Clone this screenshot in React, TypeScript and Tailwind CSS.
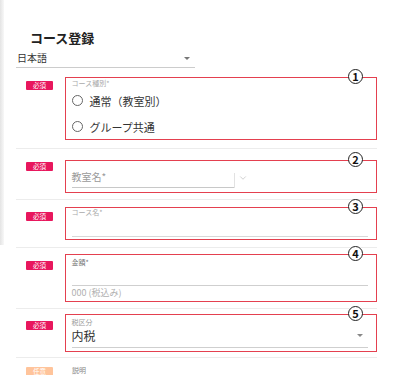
import { ChevronDown } from "lucide-react";

const font = "font-['Noto_Sans_CJK_JP','Noto_Sans',sans-serif]";

function Badge({ kind = "req", mt }: { kind?: "req" | "opt"; mt: string }) {
  return (
    <div className={`pl-[10px] ${mt}`}>
      <div
        className={`w-[27px] h-[9px] rounded-[1px] flex items-center justify-center text-[6.5px] leading-none text-white ${
          kind === "req" ? "bg-[#e8175d]" : "bg-[#ffc49b]"
        }`}
      >
        {kind === "req" ? "必須" : "任意"}
      </div>
    </div>
  );
}

function Num({ n }: { n: string }) {
  return (
    <div className="absolute -top-[9px] right-[13px] w-[15px] h-[15px] rounded-full border border-[#222] bg-white flex items-center justify-center text-[11px] font-bold leading-none text-[#111]">
      {n}
    </div>
  );
}

function Box({ h, n, children }: { h: string; n: string; children: React.ReactNode }) {
  return (
    <div className={`relative ml-[12px] w-[312px] ${h} border-[1.5px] border-[#e4404f] pl-[5.5px]`}>
      <Num n={n} />
      {children}
    </div>
  );
}

function Radio({ label }: { label: string }) {
  return (
    <div className="flex items-center h-[14px]">
      <span className="w-[11px] h-[11px] rounded-full border border-[#666]" />
      <span className="ml-[7px] text-[11px] leading-[14px] text-[#333]">{label}</span>
    </div>
  );
}

export default function App() {
  return (
    <div className={`flex items-start bg-white min-h-[375px] ${font}`}>
      <div className="w-[4px] h-[245px] bg-gradient-to-r from-[#e4e4e4] to-[#f8f8f8]" />
      <div className="ml-[12px] w-[361px]">
        <h1 className="pt-[31px] pl-[14px] text-[13px] font-bold leading-[14px] text-[#222]">
          コース登録
        </h1>
        <div className="mt-[7px] w-[179px] h-[16px] border-b border-[#ccc] flex justify-between pl-[1px] pr-[5px]">
          <span className="text-[10px] leading-[12px] text-[#333]">日本語</span>
          <span className="mt-[5px] w-0 h-0 border-l-[3px] border-r-[3px] border-t-[3px] border-l-transparent border-r-transparent border-t-[#777]" />
        </div>

        {/* 1 */}
        <div className="flex items-start pt-[9px] pb-[8px] border-b border-[#ececec]">
          <Badge mt="mt-[4px]" />
          <Box h="h-[63px]" n="1">
            <div className="pt-[0.5px] text-[7px] leading-[8px] text-[#aaa]">コース種別*</div>
            <div className="mt-[7px]">
              <Radio label="通常（教室別）" />
            </div>
            <div className="mt-[12px]">
              <Radio label="グループ共通" />
            </div>
          </Box>
        </div>

        {/* 2 */}
        <div className="flex items-start pt-[11px] pb-[6px] border-b border-[#ececec]">
          <Badge mt="mt-[2px]" />
          <Box h="h-[33px]" n="2">
            <div className="flex items-end pt-[9.5px]">
              <div className="w-[162px] h-[17px] border-b border-[#c8c8c8] text-[10px] leading-[12px] text-[#9a9a9a]">
                教室名*
              </div>
              <div className="w-px h-[15px] bg-[#e2e2e2]" />
              <ChevronDown className="ml-[3px] mb-[5px] w-[10px] h-[10px] text-[#c8c8c8]" strokeWidth={2} />
            </div>
          </Box>
        </div>

        {/* 3 */}
        <div className="flex items-start pt-[7px] pb-[7px] border-b border-[#ececec]">
          <Badge mt="mt-[5px]" />
          <Box h="h-[33px]" n="3">
            <div className="w-[296px] h-[29px] border-b-[1.5px] border-[#d8d8d8] text-[7px] leading-[8px] text-[#aaa]">
              コース名*
            </div>
          </Box>
        </div>

        {/* 4 */}
        <div className="flex items-start pt-[6px] pb-[6px] border-b border-[#ececec]">
          <Badge mt="mt-[7px]" />
          <Box h="h-[48px]" n="4">
            <div className="pt-[2.5px] w-[296px] h-[31px] border-b border-[#cfcfcf] text-[7px] leading-[8px] text-[#777]">
              金額*
            </div>
            <div className="mt-[1px] text-[9px] leading-[11px] text-[#b0b0b0]">000 (税込み)</div>
          </Box>
        </div>

        {/* 5 */}
        <div className="flex items-start pt-[5px] pb-[5px] border-b border-[#ececec]">
          <Badge mt="mt-[7px]" />
          <Box h="h-[38px]" n="5">
            <div className="pt-[2.5px] text-[7px] leading-[8px] text-[#999]">税区分</div>
            <div className="mt-[3px] w-[296px] h-[19px] border-b border-[#cfcfcf] flex justify-between pr-[5px]">
              <span className="text-[12px] leading-[14px] text-[#333]">内税</span>
              <span className="mt-[5px] w-0 h-0 border-l-[3px] border-r-[3px] border-t-[3px] border-l-transparent border-r-transparent border-t-[#888]" />
            </div>
          </Box>
        </div>

        {/* 6 */}
        <div className="flex items-start pt-[9px]">
          <Badge kind="opt" mt="mt-0" />
          <div className="ml-[19px] mt-[-1px] text-[7px] leading-[9px] text-[#888]">説明</div>
        </div>
      </div>
    </div>
  );
}
